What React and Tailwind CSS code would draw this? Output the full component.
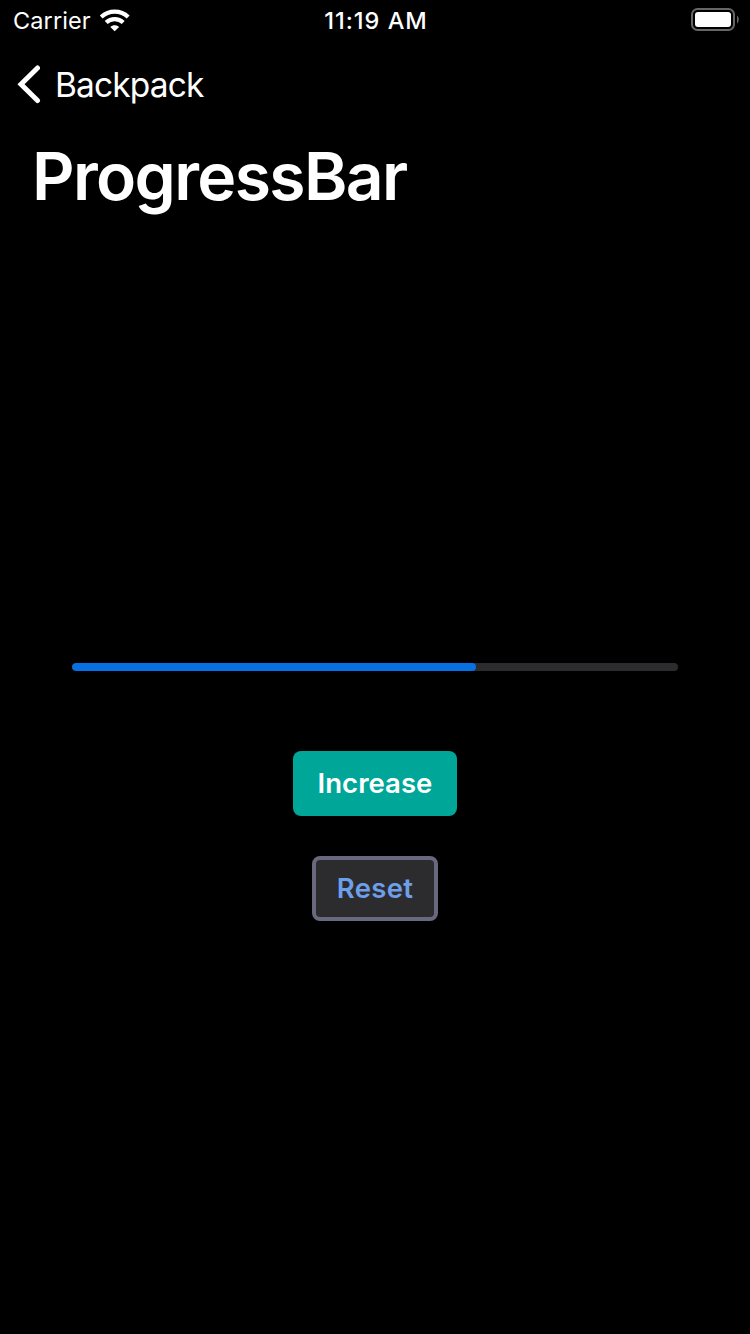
function StatusBar() {
  return (
    <div className="flex h-10 items-center justify-between pl-[13px] pr-[11px] text-[23.5px] leading-10">
      <div className="flex flex-1 items-center gap-[9px]">
        <span className="w-[78px] pt-0.5 leading-10 font-[370] tracking-[0.1px]">Carrier</span>
        <svg width="31" height="23" viewBox="0 0 31 23" fill="none" stroke="white" strokeWidth="4.2">
          <path d="M1.2 8C8.7 .9 20.7 .9 28.2 8" />
          <path d="M6.2 13.5C11 8.9 18.4 8.9 23.2 13.5" />
          <path d="M14.7 22.3L10.3 18C12.7 15.5 16.7 15.5 19.1 18Z" fill="white" stroke="none" />
        </svg>
      </div>
      <span className="pt-0.5 font-medium leading-10 tracking-[1px]">11:19 AM</span>
      <div className="flex flex-1 justify-end pb-0.5">
        <svg width="48" height="23" viewBox="0 0 48 23">
          <rect x="1" y="1" width="42" height="21" rx="5.5" fill="none" stroke="#666" strokeWidth="2" />
          <rect x="4" y="4" width="36" height="15" rx="3" fill="white" />
          <path d="M46 7.5C48.3 9 48.3 14 46 15.5Z" fill="#666" />
        </svg>
      </div>
    </div>
  );
}

export default function App() {
  return (
    <main className="flex h-[1334px] w-[750px] flex-col bg-black font-['Inter',sans-serif] text-white">
      <StatusBar />
      <nav className="flex h-[88px] items-center pl-[17px]">
        <svg width="24" height="40" viewBox="0 0 24 40" fill="none" stroke="white" strokeWidth="5" strokeLinecap="round" strokeLinejoin="miter">
          <path d="M20.5 4L4 20.2L20.5 36.5" />
        </svg>
        <span className="ml-[14px] pt-px text-[33.5px] leading-10 font-[370] tracking-[-0.85px]">Backpack</span>
      </nav>
      <h1 className="h-[96px] pl-8 text-[66px] leading-[96px] font-semibold tracking-[-1.65px]">ProgressBar</h1>
      <section className="flex flex-col items-center pt-[439px]">
        <div className="h-2 w-[606px] overflow-hidden rounded-full bg-[#2c2c2e]">
          <div className="h-2 w-[404px] rounded-full bg-[#0770e3]" />
        </div>
        <button className="mt-20 h-[65px] w-[164px] rounded-lg bg-[#00a698] pt-px text-[27.5px] font-semibold tracking-[0.05px]">Increase</button>
        <button className="mt-10 h-[65px] w-[126px] rounded-lg border-4 border-[#68697f] bg-[#2c2c2e] pt-px text-[27.5px] font-semibold tracking-[0.3px] text-[#6d9feb]">Reset</button>
      </section>
    </main>
  );
}
